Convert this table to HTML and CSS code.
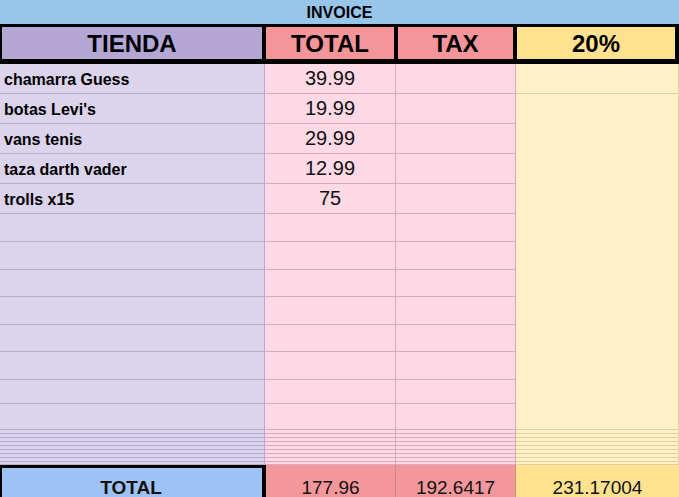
FILE: index.html
```html
<!DOCTYPE html>
<html>
<head>
<meta charset="utf-8">
<link rel="stylesheet" href="styles.css">
</head>
<body>
<div class="sheet">
  <div class="title">INVOICE</div>
  <div class="head">
    <div class="hc h-purple">TIENDA</div>
    <div class="hc h-red">TOTAL</div>
    <div class="hc h-red">TAX</div>
    <div class="hc h-yellow">20%</div>
  </div>
  <div class="body">
    <div class="col c-purple">
      <div class="cell r30 name">chamarra Guess</div>
      <div class="cell r30 name">botas Levi's</div>
      <div class="cell r30 name">vans tenis</div>
      <div class="cell r30 name">taza darth vader</div>
      <div class="cell r30 name">trolls x15</div>
      <div class="cell r28"></div>
      <div class="cell r28"></div>
      <div class="cell r27"></div>
      <div class="cell r28"></div>
      <div class="cell r27"></div>
      <div class="cell r28"></div>
      <div class="cell r24"></div>
      <div class="cell r26"></div>
      <div class="cell r4"></div><div class="cell r4"></div><div class="cell r4"></div><div class="cell r4"></div>
      <div class="cell r4"></div><div class="cell r4"></div><div class="cell r4"></div><div class="cell r4"></div>
      <div class="cell r3"></div>
    </div>
    <div class="col c-pink">
      <div class="cell r30 num">39.99</div>
      <div class="cell r30 num">19.99</div>
      <div class="cell r30 num">29.99</div>
      <div class="cell r30 num">12.99</div>
      <div class="cell r30 num">75</div>
      <div class="cell r28"></div>
      <div class="cell r28"></div>
      <div class="cell r27"></div>
      <div class="cell r28"></div>
      <div class="cell r27"></div>
      <div class="cell r28"></div>
      <div class="cell r24"></div>
      <div class="cell r26"></div>
      <div class="cell r4"></div><div class="cell r4"></div><div class="cell r4"></div><div class="cell r4"></div>
      <div class="cell r4"></div><div class="cell r4"></div><div class="cell r4"></div><div class="cell r4"></div>
      <div class="cell r3"></div>
    </div>
    <div class="col c-pink">
      <div class="cell r30"></div>
      <div class="cell r30"></div>
      <div class="cell r30"></div>
      <div class="cell r30"></div>
      <div class="cell r30"></div>
      <div class="cell r28"></div>
      <div class="cell r28"></div>
      <div class="cell r27"></div>
      <div class="cell r28"></div>
      <div class="cell r27"></div>
      <div class="cell r28"></div>
      <div class="cell r24"></div>
      <div class="cell r26"></div>
      <div class="cell r4"></div><div class="cell r4"></div><div class="cell r4"></div><div class="cell r4"></div>
      <div class="cell r4"></div><div class="cell r4"></div><div class="cell r4"></div><div class="cell r4"></div>
      <div class="cell r3"></div>
    </div>
    <div class="col c-yellow">
      <div class="cell r30"></div>
      <div class="cell merged"></div>
      <div class="cell r4"></div><div class="cell r4"></div><div class="cell r4"></div><div class="cell r4"></div>
      <div class="cell r4"></div><div class="cell r4"></div><div class="cell r4"></div><div class="cell r4"></div>
      <div class="cell r3"></div>
    </div>
  </div>
  <div class="foot">
    <div class="fc f-label">TOTAL</div>
    <div class="fc f-red">177.96</div>
    <div class="fc f-red f-sep">192.6417</div>
    <div class="fc f-yellow">231.17004</div>
  </div>
</div>
</body>
</html>
```
FILE: styles.css
```css
html, body {
  margin: 0;
  padding: 0;
  background: #ffffff;
}
body {
  font-family: "Liberation Sans", Arial, sans-serif;
  color: #000;
  overflow: hidden;
}
.sheet {
  width: 679px;
  height: 497px;
  overflow: hidden;
}
.title {
  height: 24px;
  background: #98c6ea;
  font-weight: bold;
  font-size: 16px;
  line-height: 26px;
  text-align: center;
}
.head {
  display: grid;
  grid-template-columns: 260px 128px 115px 158px;
  column-gap: 4px;
  padding: 3px 4px 5px 2px;
  background: #000;
}
.hc {
  height: 32px;
  display: flex;
  align-items: center;
  justify-content: center;
  font-weight: bold;
  font-size: 24px;
  padding-top: 2px;
  box-sizing: border-box;
}
.h-purple { background: #b4a7d6; }
.h-red { background: #f4959a; }
.h-yellow { background: #ffe28f; }

.body {
  display: grid;
  grid-template-columns: 265px 131px 120px 163px;
}
.col {
  display: flex;
  flex-direction: column;
}
.cell {
  box-sizing: border-box;
  border-bottom: 1px solid;
  border-right: 1px solid;
  display: flex;
  align-items: center;
}
.c-purple .cell { background: #dcd3ec; border-color: #b8a9cf; }
.c-pink .cell { background: #ffd9e6; border-color: #d9a9bd; }
.c-yellow .cell { background: #fff0c8; border-color: #e3cfa2; }
.r30 { height: 30px; }
.r28 { height: 28px; }
.r27 { height: 27px; }
.r26 { height: 26px; }
.r24 { height: 24px; }
.r4 { height: 4px; }
.r3 { height: 3px; }
.merged { height: 336px; }
.name {
  font-weight: bold;
  font-size: 16px;
  padding-left: 4px;
  padding-top: 3px;
}
.num {
  justify-content: center;
  font-size: 20px;
  padding-bottom: 1px;
  color: #111;
}
.foot {
  display: grid;
  grid-template-columns: 266px 130px 120px 163px;
  height: 42px;
}
.fc {
  box-sizing: border-box;
  display: flex;
  align-items: center;
  justify-content: center;
  font-size: 19px;
  padding-top: 3px;
  color: #111;
}
.f-label {
  background: #9fc2f4;
  border-top: 3px solid #000;
  border-left: 2px solid #000;
  border-right: 4px solid #000;
  font-weight: bold;
  font-size: 19px;
  padding-top: 0;
  padding-right: 2px;
}
.f-red { background: #f4979a; border-right: 1px solid #cf8a90; }
.f-yellow { background: #ffe28f; }
```
